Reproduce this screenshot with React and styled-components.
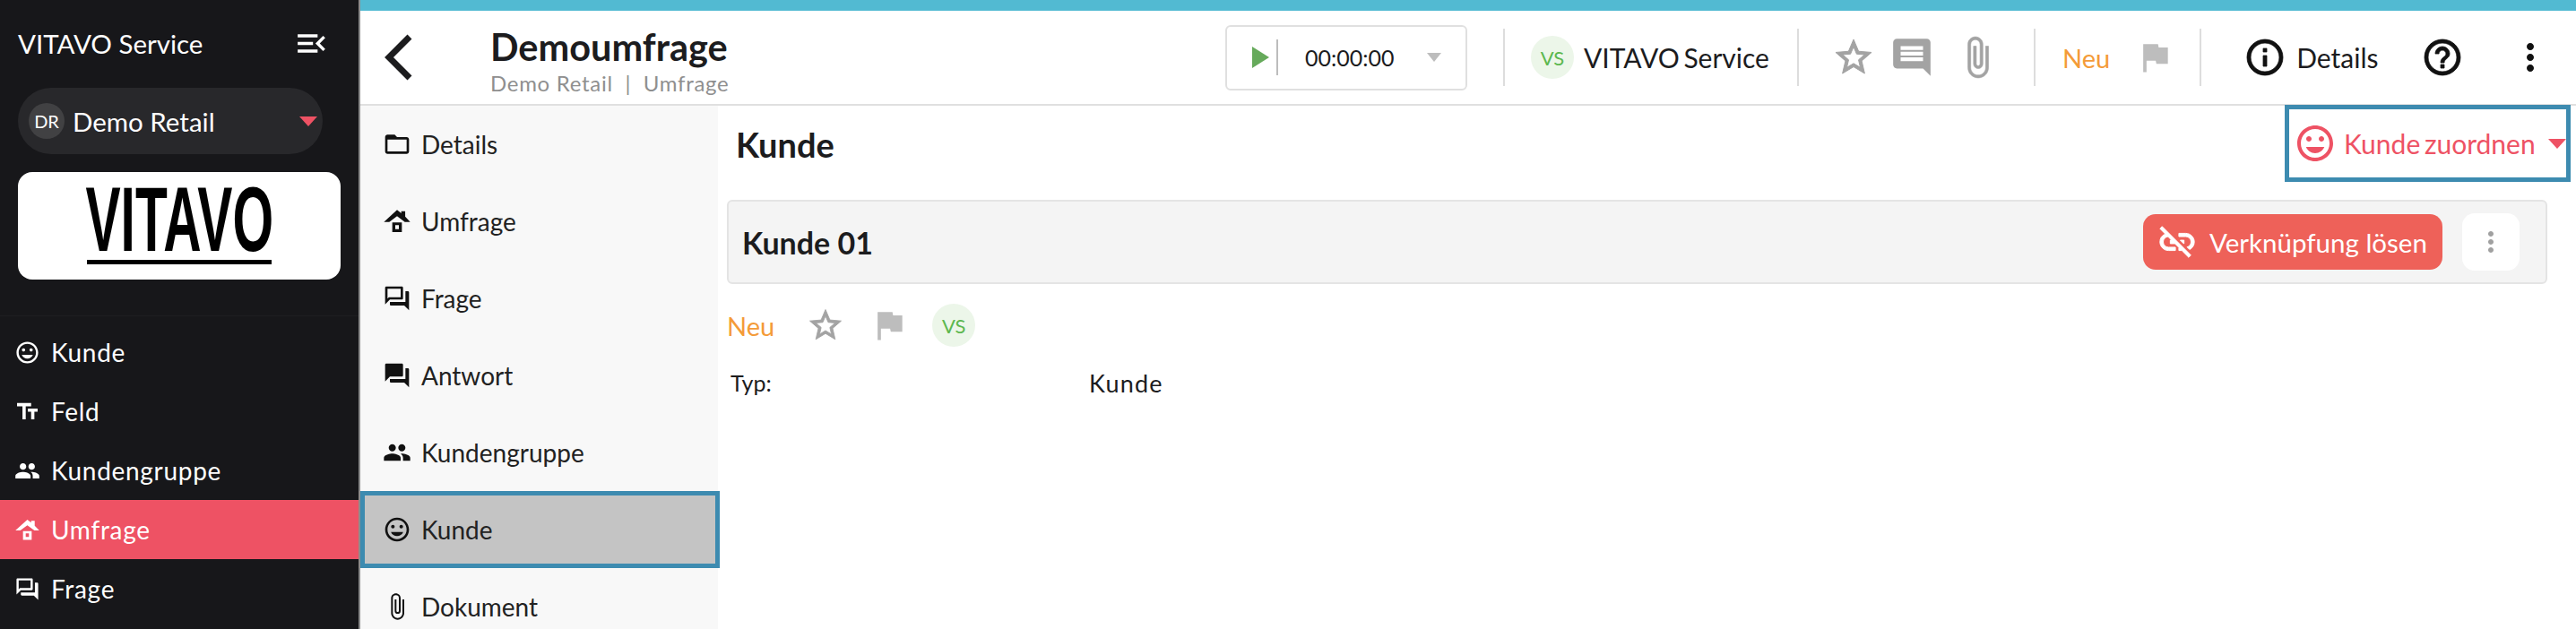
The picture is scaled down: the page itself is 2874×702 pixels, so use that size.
import styled, { createGlobalStyle } from 'styled-components';
import {
  MdMood, MdTextFields, MdPeople, MdOutlineQuestionAnswer, MdQuestionAnswer, MdFolderOpen,
  MdAttachFile, MdStarBorder, MdFlag, MdComment, MdInfoOutline, MdHelpOutline, MdMoreVert,
  MdLinkOff, MdMenuOpen,
} from 'react-icons/md';

const GlobalStyle = createGlobalStyle`
  html, body { margin: 0; height: 100%; overflow: hidden; background: #fff; }
  body { font-family: Lato, "Open Sans", sans-serif; color: #1c1c1e; }
  #root { height: 100%; }
  * { box-sizing: border-box; }
`;

const Shell = styled.div`
  display: flex;
  width: 2874px;
  height: 702px;
  overflow: hidden;
`;

const Sidebar = styled.aside`
  width: 400px;
  flex: none;
  background: #17171a;
  color: #fff;
  padding-top: 28px;
`;

const SideTop = styled.div`
  display: flex;
  align-items: center;
  justify-content: space-between;
  height: 40px;
  padding: 0 32px 0 20px;
  font-size: 29.5px;
  svg { font-size: 41px; flex: none; }
`;

const OrgPill = styled.div`
  display: flex;
  align-items: center;
  width: 340px;
  height: 74px;
  margin: 30px 0 0 20px;
  padding: 0 6px 0 12px;
  background: #28282b;
  border-radius: 37px;
  font-size: 29.5px;
`;

const OrgAvatar = styled.span`
  width: 40px;
  height: 40px;
  margin-right: 9px;
  display: flex;
  align-items: center;
  justify-content: center;
  border-radius: 50%;
  background: #414143;
  font-size: 20px;
`;

const Caret = styled.span`
  width: 0;
  height: 0;
  flex: none;
  border-left: ${(p) => p.$w / 2}px solid transparent;
  border-right: ${(p) => p.$w / 2}px solid transparent;
  border-top: ${(p) => p.$h}px solid ${(p) => p.$color};
  margin-left: ${(p) => p.$left || 'auto'};
`;

const LogoBox = styled.div`
  width: 360px;
  height: 120px;
  margin: 20px 0 0 20px;
  background: #fff;
  border-radius: 16px;
  display: flex;
  flex-direction: column;
  align-items: center;
  padding-top: 12px;
`;

const LogoWord = styled.span`
  font-family: "Liberation Sans", sans-serif;
  font-weight: 700;
  font-size: 102px;
  line-height: 82px;
  height: 82px;
  color: #000;
  transform: scaleX(0.575);
  white-space: nowrap;
`;

const LogoRule = styled.span`
  width: 206px;
  height: 5px;
  margin-top: 4px;
  background: #000;
`;

const SideMenu = styled.nav`
  margin-top: 40px;
  border-top: 1px solid #1e1e21;
  padding-top: 7px;
`;

const SideItem = styled.div`
  display: flex;
  align-items: center;
  height: 66px;
  padding-left: 16px;
  gap: 12px;
  font-size: 28px;
  letter-spacing: 0.7px;
  background: ${(p) => (p.$active ? '#ee5264' : 'transparent')};
  svg { font-size: 29px; flex: none; }
`;

const Right = styled.div`
  flex: 1;
  min-width: 0;
  border-left: 2px solid #8c8c8c;
  display: flex;
  flex-direction: column;
`;

const TopStripe = styled.div`
  height: 12px;
  background: #52bad2;
  flex: none;
`;

const Header = styled.header`
  height: 106px;
  flex: none;
  display: flex;
  align-items: center;
  border-bottom: 2px solid #e0e0e0;
`;

const BackButton = styled.div`
  width: 145px;
  padding-left: 24px;
  flex: none;
  display: flex;
  align-items: center;
  color: #1c1c1e;
`;

const TitleBlock = styled.div`
  width: 820px;
  flex: none;
  padding-top: 7px;
`;

const PageTitle = styled.div`
  font-size: 41.5px;
  font-weight: 700;
  line-height: 46px;
`;

const Crumb = styled.div`
  font-size: 24px;
  line-height: 26px;
  margin-top: 5px;
  letter-spacing: 0.7px;
  color: #8f8f8f;
  white-space: pre;
`;

const Timer = styled.div`
  width: 270px;
  height: 73px;
  flex: none;
  display: flex;
  align-items: center;
  border: 2px solid #e0e0e0;
  border-radius: 6px;
  padding-left: 28px;
`;

const PlayTriangle = styled.span`
  width: 0;
  height: 0;
  border-top: 12px solid transparent;
  border-bottom: 12px solid transparent;
  border-left: 19px solid #66aa5b;
`;

const TimerRule = styled.span`
  width: 2px;
  height: 40px;
  margin: 0 30px 0 8px;
  background: #bdbdbd;
`;

const TimerText = styled.span`
  font-size: 25px;
  width: 101px;
`;

const Divider = styled.span`
  width: 2px;
  height: 64px;
  flex: none;
  background: #ddd;
  margin: 0 ${(p) => p.$right || 0}px 0 ${(p) => p.$left || 0}px;
`;

const VsBadge = styled.span`
  width: 48px;
  height: 48px;
  flex: none;
  border-radius: 50%;
  background: #ecf6e9;
  color: #5cb84f;
  font-size: 22px;
  display: flex;
  align-items: center;
  justify-content: center;
`;

const OwnerName = styled.span`
  font-size: 30px;
  word-spacing: -3px;
  margin: 0 32px 0 11px;
  width: 206px;
  flex: none;
  white-space: nowrap;
`;

const IconSlot = styled.span`
  display: flex;
  align-items: center;
  justify-content: center;
  flex: none;
  width: ${(p) => p.$w}px;
  margin-left: ${(p) => p.$left || 0}px;
  color: ${(p) => p.$color || '#a3a3a3'};
  svg {
    flex: none;
    font-size: ${(p) => p.$size}px;
    stroke: currentColor;
    stroke-width: ${(p) => p.$weight || 0};
  }
  svg path[fill='none'] { stroke: none; }
`;

const NewLabel = styled.span`
  color: #f49b38;
  font-size: 29px;
  flex: none;
  line-height: 1;
`;

const HeadText = styled.span`
  font-size: 30px;
  margin-left: 13px;
  width: 90px;
  flex: none;
`;

const Body = styled.div`
  flex: 1;
  display: flex;
  min-height: 0;
`;

const SubNav = styled.nav`
  width: 399px;
  flex: none;
  background: #f8f8f8;
`;

const SubItem = styled.div`
  height: 86px;
  display: flex;
  align-items: center;
  padding-left: ${(p) => (p.$active ? '20px' : '25px')};
  gap: 11px;
  font-size: 28px;
  color: #222;
  margin-right: ${(p) => (p.$active ? '-2px' : '0')};
  position: relative;
  ${(p) => p.$active && 'background: #c4c4c4; border: 5px solid #3d8bb0;'}
  svg { font-size: 32px; flex: none; color: #111; }
`;

const Main = styled.main`
  flex: 1;
  min-width: 0;
  padding: 0 32px 0 10px;
`;

const MainTop = styled.div`
  display: flex;
  align-items: flex-start;
  justify-content: space-between;
  height: 105px;
  padding-left: 10px;
  margin-right: -26px;
`;

const MainTitle = styled.h2`
  margin: 20px 0 0;
  font-size: 38px;
  line-height: 46px;
  font-weight: 700;
`;

const AssignButton = styled.div`
  width: 319px;
  height: 86px;
  margin-top: -1px;
  border: 5px solid #3d8bb0;
  display: flex;
  align-items: center;
  padding-left: 5px;
  color: #ee5264;
  font-size: 30px;
  word-spacing: -3px;
  white-space: nowrap;
  svg { font-size: 48px; flex: none; margin-right: 8px; }
`;

const Card = styled.section`
  height: 94px;
  display: flex;
  align-items: center;
  background: #f4f4f4;
  border: 2px solid #e4e4e4;
  border-radius: 6px;
  padding: 0 29px 0 15px;
`;

const CardTitle = styled.div`
  font-size: 34px;
  font-weight: 700;
  flex: 1;
`;

const UnlinkButton = styled.div`
  width: 334px;
  height: 62px;
  display: flex;
  align-items: center;
  padding-left: 15px;
  gap: 13px;
  background: #ee6159;
  border-radius: 14px;
  color: #fff;
  font-size: 29.5px;
  white-space: nowrap;
  svg { font-size: 46px; flex: none; stroke: currentColor; stroke-width: 0.5; }
  svg path[fill='none'] { stroke: none; }
`;

const KebabButton = styled.div`
  width: 64px;
  height: 64px;
  margin-left: 22px;
  background: #fff;
  border-radius: 14px;
  display: flex;
  align-items: center;
  justify-content: center;
  color: #a0a0a0;
  svg { font-size: 36px; }
`;

const MetaRow = styled.div`
  display: flex;
  align-items: center;
  margin-top: 22px;
  height: 48px;
`;

const InfoRow = styled.div`
  display: flex;
  align-items: center;
  margin: 17px 0 0 4px;
  height: 46px;
`;

const InfoLabel = styled.span`
  width: 400px;
  font-size: 25px;
`;

const InfoValue = styled.span`
  font-size: 27px;
  letter-spacing: 1.2px;
`;

// small house with chimney and window, not in the icon sets
const SurveyIcon = () => (
  <svg width="1em" height="1em" viewBox="0 0 24 24" fill="currentColor">
    <path d="M12 2.5 15.5 5.2V3.5H18.8V8L23 12.5H18.5L12 7.6 5.5 12.5H1z" />
    <path fillRule="evenodd" d="M8 13H16V21H8zM10.5 15.2V18.5H13.5V15.2z" />
  </svg>
);

const BackChevron = () => (
  <svg width="34" height="54" viewBox="0 0 34 54" fill="none" stroke="currentColor" strokeWidth="7">
    <path d="M31 4 8 27 31 50" />
  </svg>
);

const sideItems = [
  { icon: <MdMood />, label: 'Kunde' },
  { icon: <MdTextFields />, label: 'Feld' },
  { icon: <MdPeople />, label: 'Kundengruppe' },
  { icon: <SurveyIcon />, label: 'Umfrage', active: true },
  { icon: <MdOutlineQuestionAnswer />, label: 'Frage' },
];

const subItems = [
  { icon: <MdFolderOpen />, label: 'Details' },
  { icon: <SurveyIcon />, label: 'Umfrage' },
  { icon: <MdOutlineQuestionAnswer />, label: 'Frage' },
  { icon: <MdQuestionAnswer />, label: 'Antwort' },
  { icon: <MdPeople />, label: 'Kundengruppe' },
  { icon: <MdMood />, label: 'Kunde', active: true },
  { icon: <MdAttachFile />, label: 'Dokument' },
];

export default function App() {
  return (
    <Shell>
      <GlobalStyle />
      <Sidebar>
        <SideTop>
          VITAVO Service
          <MdMenuOpen />
        </SideTop>
        <OrgPill>
          <OrgAvatar>DR</OrgAvatar>
          Demo Retail
          <Caret $w={20} $h={11} $color="#ee5264" />
        </OrgPill>
        <LogoBox>
          <LogoWord>VITAVO</LogoWord>
          <LogoRule />
        </LogoBox>
        <SideMenu>
          {sideItems.map((item) => (
            <SideItem key={item.label} $active={item.active}>
              {item.icon}
              {item.label}
            </SideItem>
          ))}
        </SideMenu>
      </Sidebar>
      <Right>
        <TopStripe />
        <Header>
          <BackButton><BackChevron /></BackButton>
          <TitleBlock>
            <PageTitle>Demoumfrage</PageTitle>
            <Crumb>Demo Retail  |  Umfrage</Crumb>
          </TitleBlock>
          <Timer>
            <PlayTriangle />
            <TimerRule />
            <TimerText>00:00:00</TimerText>
            <Caret $w={17} $h={10} $color="#bdbdbd" $left="35px" />
          </Timer>
          <Divider $left={40} $right={29} />
          <VsBadge>VS</VsBadge>
          <OwnerName>VITAVO Service</OwnerName>
          <Divider />
          <IconSlot $w={44} $size={48} $left={39} $weight={0.5}><MdStarBorder /></IconSlot>
          <IconSlot $w={44} $size={50} $left={21}><MdComment /></IconSlot>
          <IconSlot $w={30} $size={50} $left={36} $weight={0.3}><MdAttachFile /></IconSlot>
          <Divider $left={48} $right={30} />
          <NewLabel>Neu</NewLabel>
          <IconSlot $w={32} $size={44} $left={34} $color="#bdbdbd"><MdFlag /></IconSlot>
          <Divider $left={34} $right={49} />
          <IconSlot $w={44} $size={48} $color="#111" $weight={0.4}><MdInfoOutline /></IconSlot>
          <HeadText>Details</HeadText>
          <IconSlot $w={44} $size={48} $left={51} $color="#111" $weight={0.4}><MdHelpOutline /></IconSlot>
          <IconSlot $w={44} $size={48} $left={54} $color="#111"><MdMoreVert /></IconSlot>
        </Header>
        <Body>
          <SubNav>
            {subItems.map((item) => (
              <SubItem key={item.label} $active={item.active}>
                {item.icon}
                {item.label}
              </SubItem>
            ))}
          </SubNav>
          <Main>
            <MainTop>
              <MainTitle>Kunde</MainTitle>
              <AssignButton>
                <MdMood />
                Kunde zuordnen
                <Caret $w={21} $h={11} $color="#ee5264" />
              </AssignButton>
            </MainTop>
            <Card>
              <CardTitle>Kunde 01</CardTitle>
              <UnlinkButton><MdLinkOff />Verknüpfung lösen</UnlinkButton>
              <KebabButton><MdMoreVert /></KebabButton>
            </Card>
            <MetaRow>
              <NewLabel>Neu</NewLabel>
              <IconSlot $w={38} $size={42} $left={38} $weight={0.5}><MdStarBorder /></IconSlot>
              <IconSlot $w={30} $size={44} $left={37} $color="#bdbdbd"><MdFlag /></IconSlot>
              <IconSlot $w={48} $size={1} $left={33}><VsBadge>VS</VsBadge></IconSlot>
            </MetaRow>
            <InfoRow>
              <InfoLabel>Typ:</InfoLabel>
              <InfoValue>Kunde</InfoValue>
            </InfoRow>
          </Main>
        </Body>
      </Right>
    </Shell>
  );
}
